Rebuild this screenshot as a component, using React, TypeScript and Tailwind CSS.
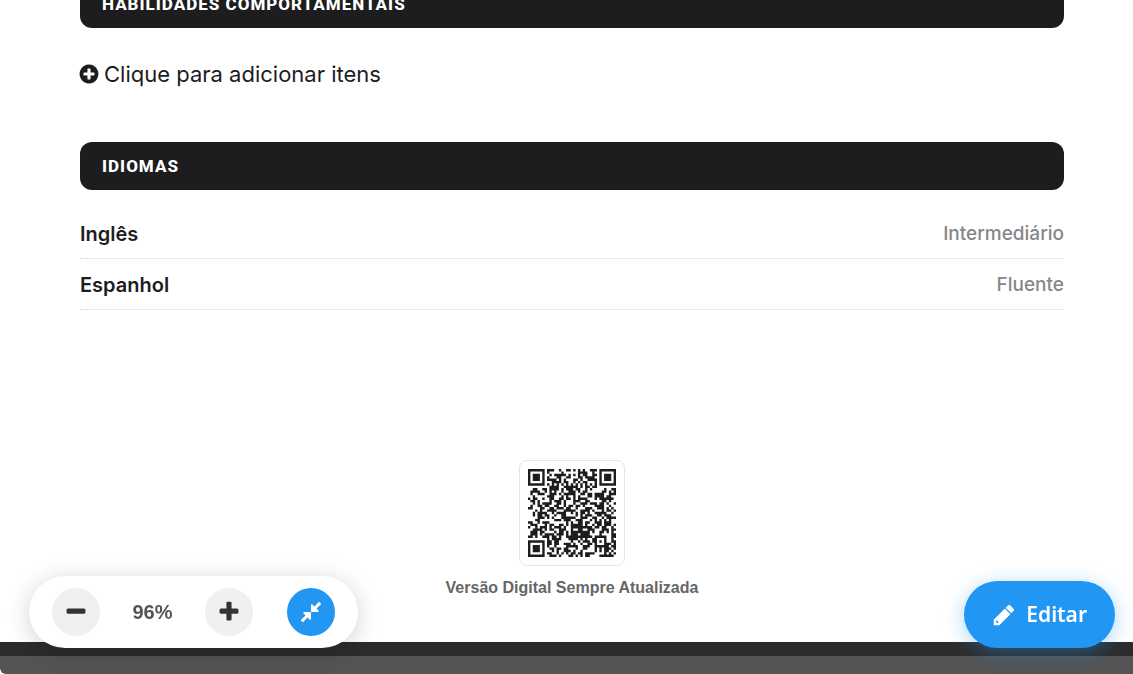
import type { ReactNode } from "react";

const icons = {
  plusCircle:
    "M1344 960v-128q0-26-19-45t-45-19h-256v-256q0-26-19-45t-45-19h-128q-26 0-45 19t-19 45v256h-256q-26 0-45 19t-19 45v128q0 26 19 45t45 19h256v256q0 26 19 45t45 19h128q26 0 45-19t19-45v-256h256q26 0 45-19t19-45zm320-64q0 209-103 385.5t-279.5 279.5-385.5 103-385.5-103-279.5-279.5-103-385.5 103-385.5 279.5-279.5 385.5-103 385.5 103 279.5 279.5 103 385.5z",
  minus:
    "M1600 736v192q0 40-28 68t-68 28h-1216q-40 0-68-28t-28-68v-192q0-40 28-68t68-28h1216q40 0 68 28t28 68z",
  plus: "M1600 736v192q0 40-28 68t-68 28h-416v416q0 40-28 68t-68 28h-192q-40 0-68-28t-28-68v-416h-416q-40 0-68-28t-28-68v-192q0-40 28-68t68-28h416v-416q0-40 28-68t68-28h192q40 0 68 28t28 68v416h416q40 0 68 28t28 68z",
  compress:
    "M896 960v448q0 26-19 45t-45 19-45-19l-144-144-332 332q-10 10-23 10t-23-10l-114-114q-10-10-10-23t10-23l332-332-144-144q-19-19-19-45t19-45 45-19h448q26 0 45 19t19 45zm755-672q0 13-10 23l-332 332 144 144q19 19 19 45t-19 45-45 19h-448q-26 0-45-19t-19-45v-448q0-26 19-45t45-19 45 19l144 144 332-332q10-10 23-10t23 10l114 114q10 10 10 23z",
  pencil:
    "M430 1500l70-70-150-150-70 70v70h80v80h70zm530-1084l416 416-832 832h-416v-416zm683 96q0 53-37 90l-166 166-416-416 166-165q36-38 90-38 53 0 91 38l235 234q37 39 37 91z",
};

function Icon({ name, className }: { name: keyof typeof icons; className: string }) {
  return (
    <svg viewBox="0 0 1792 1792" fill="currentColor" fillRule="evenodd" aria-hidden="true" className={className}>
      <path d={icons[name]} />
    </svg>
  );
}

const QR_SIZE = 37;

// Square rings around a centre: finder marks in three corners, one alignment mark.
function ringDistance(x: number, y: number, cx: number, cy: number) {
  return Math.max(Math.abs(x - cx), Math.abs(y - cy));
}

function buildQrPath() {
  const far = QR_SIZE - 4;
  const finders = [
    [3, 3],
    [far, 3],
    [3, far],
  ];
  let seed = 20917;
  let path = "";
  for (let y = 0; y < QR_SIZE; y++) {
    for (let x = 0; x < QR_SIZE; x++) {
      seed = (Math.imul(seed, 1664525) + 1013904223) >>> 0;
      let dark = seed / 4294967296 < 0.54;
      if (x === 6 || y === 6) dark = (x + y) % 2 === 0;
      const alignment = ringDistance(x, y, 30, 30);
      if (alignment <= 2) dark = alignment !== 1;
      for (const [cx, cy] of finders) {
        const distance = ringDistance(x, y, cx, cy);
        if (distance <= 4) dark = distance !== 2 && distance !== 4;
      }
      if (dark) path += `M${x} ${y}h1v1h-1z`;
    }
  }
  return path;
}

const qrPath = buildQrPath();

const languages = [
  { name: "Inglês", level: "Intermediário" },
  { name: "Espanhol", level: "Fluente" },
];

function SectionTitle({ children }: { children: ReactNode }) {
  return (
    <h2 className="flex h-12 items-center rounded-xl bg-[#1d1d1f] px-[22px] font-['Roboto',sans-serif] text-[17px] leading-6 font-extrabold tracking-[1px] text-white uppercase">
      {children}
    </h2>
  );
}

export default function App() {
  return (
    <div className="overflow-hidden rounded-bl-md bg-[#545454] font-['Inter',sans-serif] text-[#1d1d1f]">
      <div className="border-b-[14px] border-[#2c2c2c] bg-white">
        <main className="-mt-5 pr-[69px] pb-[42px] pl-20">
          <section>
            <SectionTitle>Habilidades Comportamentais</SectionTitle>
            <button type="button" className="-ml-0.5 mt-7 flex h-9 items-center gap-1 text-[22px]">
              <Icon name="plusCircle" className="size-[22px]" />
              Clique para adicionar itens
            </button>
          </section>

          <section className="mt-[50px]">
            <SectionTitle>Idiomas</SectionTitle>
            <ul className="mt-[18px]">
              {languages.map(({ name, level }) => (
                <li
                  key={name}
                  className="flex h-[51px] items-center justify-between border-b border-dotted border-[#d2d2d7] pt-0.5"
                >
                  <span className="text-xl font-semibold">{name}</span>
                  <span className="text-[19px] font-medium text-[#86868b]">{level}</span>
                </li>
              ))}
            </ul>
          </section>

          <figure className="mt-[150px] flex flex-col items-center">
            <div className="rounded-lg border border-[#e5e5e5] bg-white p-2">
              <svg viewBox="0 0 37 37" className="size-[88px] text-[#1d1d1f]" role="img" aria-label="QR Code">
                <path d={qrPath} fill="currentColor" />
              </svg>
            </div>
            <figcaption className="mt-2.5 font-['Liberation_Sans',sans-serif] text-base font-bold text-[#666]">
              Versão Digital Sempre Atualizada
            </figcaption>
          </figure>
        </main>
      </div>
      <div className="h-[18px]" />

      <div className="fixed bottom-[26px] left-[29px] flex h-[72px] items-center rounded-full bg-white px-[23px] shadow-[0_4px_24px_rgba(0,0,0,0.18)]">
        <button
          type="button"
          aria-label="Diminuir zoom"
          className="flex size-12 items-center justify-center rounded-full bg-[#f0f0f0] text-[#333]"
        >
          <Icon name="minus" className="size-6" />
        </button>
        <span className="w-[105px] text-center font-['Liberation_Sans',sans-serif] text-xl font-bold text-[#555]">
          96%
        </span>
        <button
          type="button"
          aria-label="Aumentar zoom"
          className="flex size-12 items-center justify-center rounded-full bg-[#f0f0f0] text-[#333]"
        >
          <Icon name="plus" className="size-6" />
        </button>
        <button
          type="button"
          aria-label="Ajustar à tela"
          className="ml-[34px] flex size-12 items-center justify-center rounded-full bg-[#2196f3] text-white"
        >
          <Icon name="compress" className="size-6" />
        </button>
      </div>

      <button
        type="button"
        className="fixed right-[18px] bottom-[26px] flex h-[67px] items-center gap-2.5 rounded-full bg-[#2196f3] px-7 font-['Noto_Sans',sans-serif] text-[21px] font-semibold text-white shadow-[0_4px_20px_rgba(33,150,243,0.4)]"
      >
        <Icon name="pencil" className="size-6" />
        Editar
      </button>
    </div>
  );
}
